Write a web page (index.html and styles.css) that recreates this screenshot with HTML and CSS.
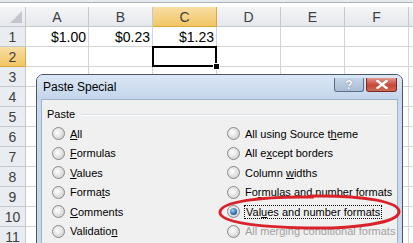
FILE: index.html
```html
<!DOCTYPE html>
<html lang="en">
<head>
    <meta charset="UTF-8">
    <title>Paste Special</title>
    <link rel="stylesheet" href="styles.css">
</head>
<body>
<div class="sheet">
    <div class="strip"></div>
    <div class="grid">
        <div class="hd corner"><span class="tri"></span></div>
        <div class="hd col">A</div>
        <div class="hd col">B</div>
        <div class="hd col sel">C</div>
        <div class="hd col">D</div>
        <div class="hd col">E</div>
        <div class="hd col">F</div>
        <div class="hd col"></div>

        <div class="hd row">1</div>
        <div class="cell num">$1.00</div>
        <div class="cell num">$0.23</div>
        <div class="cell num">$1.23</div>
        <div class="cell"></div><div class="cell"></div><div class="cell"></div><div class="cell"></div>

        <div class="hd row sel">2</div>
        <div class="cell"></div>
        <div class="cell"></div>
        <div class="cell active"><span class="handle"></span></div>
        <div class="cell"></div><div class="cell"></div><div class="cell"></div><div class="cell"></div>

        <div class="hd row">3</div><div class="cell"></div><div class="cell"></div><div class="cell"></div><div class="cell"></div><div class="cell"></div><div class="cell"></div><div class="cell"></div>
        <div class="hd row">4</div><div class="cell"></div><div class="cell"></div><div class="cell"></div><div class="cell"></div><div class="cell"></div><div class="cell"></div><div class="cell"></div>
        <div class="hd row">5</div><div class="cell"></div><div class="cell"></div><div class="cell"></div><div class="cell"></div><div class="cell"></div><div class="cell"></div><div class="cell"></div>
        <div class="hd row">6</div><div class="cell"></div><div class="cell"></div><div class="cell"></div><div class="cell"></div><div class="cell"></div><div class="cell"></div><div class="cell"></div>
        <div class="hd row">7</div><div class="cell"></div><div class="cell"></div><div class="cell"></div><div class="cell"></div><div class="cell"></div><div class="cell"></div><div class="cell"></div>
        <div class="hd row">8</div><div class="cell"></div><div class="cell"></div><div class="cell"></div><div class="cell"></div><div class="cell"></div><div class="cell"></div><div class="cell"></div>
        <div class="hd row">9</div><div class="cell"></div><div class="cell"></div><div class="cell"></div><div class="cell"></div><div class="cell"></div><div class="cell"></div><div class="cell"></div>
        <div class="hd row">10</div><div class="cell"></div><div class="cell"></div><div class="cell"></div><div class="cell"></div><div class="cell"></div><div class="cell"></div><div class="cell"></div>
        <div class="hd row">11</div><div class="cell"></div><div class="cell"></div><div class="cell"></div><div class="cell"></div><div class="cell"></div><div class="cell"></div><div class="cell"></div>
    </div>
</div>

<!-- dialog over the sheet -->
<div class="dialog">
    <div class="titlebar">
        <span class="title">Paste Special</span>
        <div class="tb-buttons">
            <span class="tb-btn help">?</span>
            <span class="tb-btn close">
                <svg width="12" height="9" viewBox="0 0 12 9"><path d="M1.5 1 L10.5 8 M10.5 1 L1.5 8" stroke="#fff" stroke-width="2.4" stroke-linecap="square"/></svg>
            </span>
        </div>
    </div>
    <div class="client">
        <div class="group-label"><span>Paste</span><span class="rule"></span></div>
        <div class="options">
            <div class="opt"><span class="radio"></span><span><u>A</u>ll</span></div>
            <div class="opt"><span class="radio"></span><span>All using Source t<u>h</u>eme</span></div>
            <div class="opt"><span class="radio"></span><span><u>F</u>ormulas</span></div>
            <div class="opt"><span class="radio"></span><span>All e<u>x</u>cept borders</span></div>
            <div class="opt"><span class="radio"></span><span><u>V</u>alues</span></div>
            <div class="opt"><span class="radio"></span><span>Column <u>w</u>idths</span></div>
            <div class="opt"><span class="radio"></span><span>Forma<u>t</u>s</span></div>
            <div class="opt"><span class="radio"></span><span>Fo<u>r</u>mulas and number formats</span></div>
            <div class="opt"><span class="radio"></span><span><u>C</u>omments</span></div>
            <div class="opt"><span class="radio on"></span><span class="focus">Val<u>u</u>es and number formats</span></div>
            <div class="opt"><span class="radio"></span><span>Validatio<u>n</u></span></div>
            <div class="opt off"><span class="radio"></span><span>All mer<u>g</u>ing conditional formats</span></div>
        </div>
    </div>
</div>

<svg class="mark" width="190" height="40" viewBox="0 0 190 40">
    <path d="M96 4 C150 3 186 10 185 20 C184 31 140 37 92 36 C42 35 5 30 6 20 C7 10 45 4 100 5" fill="none" stroke="#d9222a" stroke-width="3"/>
</svg>
</body>
</html>
```

FILE: styles.css
```css
body { margin: 0; width: 413px; height: 243px; overflow: hidden; background: #fff; font-family: "Liberation Sans", Arial, sans-serif; position: relative; }

.strip { height: 7px; box-sizing: border-box; background: linear-gradient(#e6e9ee 0, #e6e9ee 2px, #a9b0b8 2px, #a9b0b8 3px, #fff 3px); }

.grid { display: grid; grid-template-columns: 26px 63px repeat(6, 64px); grid-auto-rows: 20px; }
.hd, .cell { box-sizing: border-box; border-right: 1px solid #d4d4d4; border-bottom: 1px solid #d4d4d4; }
.hd { background: linear-gradient(#f4f5f7, #e5e8ec); color: #404040; font-size: 14px; display: flex; align-items: center; justify-content: center; border-color: #c5c9cf; }
.hd.row { background: #e9ecf0; }
.hd.sel { background: linear-gradient(#f9dea4, #f1c664); border-color: #d9a93d; }
.corner { position: relative; }
.tri { position: absolute; right: 3px; bottom: 3px; width: 0; height: 0; border-left: 12px solid transparent; border-bottom: 12px solid #c3c7cd; }

.cell { font-size: 14px; color: #000; display: flex; align-items: center; padding: 1px 2px 0; }
.num { justify-content: flex-end; }
.active { position: relative; border: none; box-shadow: inset 0 0 0 2px #000; margin: -1px 0 0 -1px; width: calc(100% + 1px); height: 21px; }
.handle { position: absolute; right: -3px; bottom: -3px; width: 5px; height: 5px; background: #000; border: 1px solid #fff; }

.dialog { position: absolute; left: 36px; top: 74px; width: 367px; height: 190px; box-sizing: border-box; border: 1px solid #4a5866; border-radius: 7px 7px 0 0; background: #c9daee; padding: 0 4px; }
.titlebar { height: 24px; display: flex; align-items: center; justify-content: space-between; background: linear-gradient(#dbe7f5, #c4d6ec); margin: 0 -4px; padding: 0 5px 0 6px; border-radius: 6px 6px 0 0; }
.title { font-size: 12px; color: #000; }
.tb-buttons { display: flex; gap: 2px; margin-top: -4px; }
.tb-btn { height: 13px; box-sizing: content-box; border: 1px solid #5d6f86; border-top: none; border-radius: 0 0 3px 3px; display: flex; align-items: center; justify-content: center; }
.help { width: 28px; background: linear-gradient(#c5d5e8, #a9bdd6); color: #fff; font-size: 12px; font-weight: bold; text-shadow: 0 0 1px #4a5d75; }
.close { width: 29px; background: linear-gradient(#e09a8b, #c7463a 55%, #d06a56); border-color: #7a2a22; }

.client { background: #f0f0f0; height: 100%; padding: 6px 0 0 2px; border: 1px solid #9fb2c8; border-bottom: none; }
.group-label { display: flex; align-items: center; gap: 6px; font-size: 11px; color: #000; height: 16px; padding-left: 3px; margin-right: 6px; }
.rule { flex: 1; height: 1px; background: #d5dfe5; box-shadow: 0 1px 0 #fff; }
.options { display: grid; grid-template-columns: 175px 1fr; grid-auto-rows: 19.5px; padding: 2px 0 0 8px; }
.opt { display: flex; align-items: center; gap: 4px; font-size: 11px; color: #000; white-space: nowrap; }
.opt u { text-underline-offset: 1px; }
.opt.off { color: #a0a0a0; }
.radio { width: 11px; height: 11px; border-radius: 50%; border: 1px solid #8a8a8a; background: radial-gradient(circle at 40% 40%, #ffffff, #d6d6d6 70%, #c4c4c4); margin-right: 1px; flex: none; position: relative; }
.radio.on::after { content: ""; position: absolute; left: 2px; top: 2px; width: 7px; height: 7px; border-radius: 50%; background: radial-gradient(circle at 40% 35%, #9cd0f5, #1f5e9b 70%, #0d3c6e); }
.focus { outline: 1px dotted #000; outline-offset: 0; padding: 0 1px; }

.mark { position: absolute; left: 214px; top: 192px; }
```
